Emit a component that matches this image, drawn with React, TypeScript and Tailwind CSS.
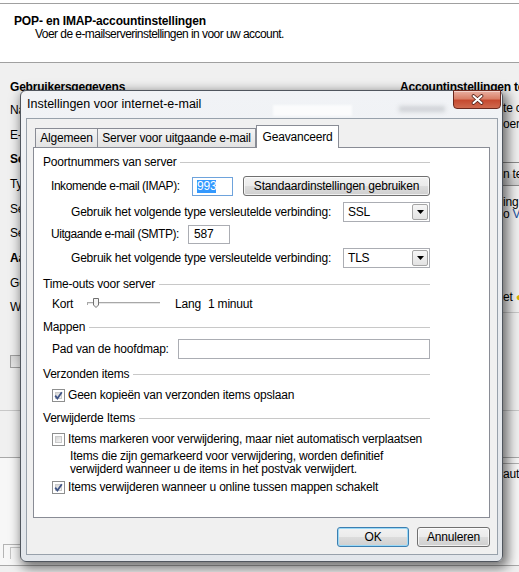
import React from "react";

function Checkbox({ checked }: { checked: boolean }) {
  return (
    <span className="relative flex h-[13px] w-[13px] shrink-0 items-center justify-center border border-[#8e8f8f] bg-white">
      <span className="absolute inset-[2px] border border-[#cacaca] bg-[linear-gradient(135deg,#d6d6d6,#f6f6f6)]" />
      {checked && (
        <svg className="relative" width="9" height="9" viewBox="0 0 9 9">
          <path d="M1.2 4.6 L3.4 7.4 L7.8 1.2" fill="none" stroke="#3f5486" strokeWidth="1.8" />
        </svg>
      )}
    </span>
  );
}

function Group({ title, className }: { title: string; className: string }) {
  return (
    <div className={`flex h-[16px] items-center ${className}`}>
      <span className="whitespace-nowrap">{title}</span>
      <span className="ml-[4px] h-px flex-1 bg-[#c8c8c8]" />
    </div>
  );
}

function Select({ value }: { value: string }) {
  return (
    <div className="flex h-[20px] w-[87px] shrink-0 items-center border border-[#abadb3] bg-white pl-[4px]">
      <span className="flex-1">{value}</span>
      <span className="mr-px flex h-[16px] w-[16px] items-center justify-center rounded-[2px] border border-[#a5a5a5] bg-[linear-gradient(#f6f6f6,#e3e3e3)]">
        <svg width="7" height="4" viewBox="0 0 7 4">
          <path d="M0 0h7L3.5 4z" fill="#000" />
        </svg>
      </span>
    </div>
  );
}

function Slider() {
  return (
    <svg width="73" height="16" viewBox="0 0 73 16" className="shrink-0">
      <line x1="0" y1="6.5" x2="73" y2="6.5" stroke="#a8a8a8" />
      <line x1="0" y1="7.5" x2="73" y2="7.5" stroke="#e6e6e6" />
      <line x1="0.5" y1="6" x2="0.5" y2="9" stroke="#a8a8a8" />
      <path d="M6.5 2.5 H11.5 V9 L9 11.5 L6.5 9 Z" fill="#f4f4f4" stroke="#707070" />
    </svg>
  );
}

export default function App() {
  return (
    <div className="relative h-[572px] w-[519px] overflow-hidden bg-[#f0f0f0] font-['Liberation_Sans',Arial,sans-serif] text-[12px] leading-[15px] tracking-[-0.2px] text-black">
      {/* wizard page header */}
      <div className="bg-white pt-[3px]">
        <div className="h-[60px] border-y border-[#a0a0a0] pl-[14px] pt-[11px] leading-[13px]">
          <div className="font-bold tracking-[-0.15px]">POP- en IMAP-accountinstellingen</div>
          <div className="pl-[21px] tracking-[-0.55px]">Voer de e-mailserverinstellingen in voor uw account.</div>
        </div>
      </div>

      {/* wizard page body */}
      <div className="flex h-[347px]">
        <div className="w-[400px] shrink-0 pl-[10px] pt-[17px]">
          <div className="font-bold">Gebruikersgegevens</div>
          <div className="mt-[3px] flex h-[24.7px] items-center">Naam:</div>
          <div className="flex h-[24.7px] items-center">E-mailadres:</div>
          <div className="flex h-[24.7px] items-center font-bold">Servergegevens</div>
          <div className="flex h-[24.7px] items-center">Type account:</div>
          <div className="flex h-[24.7px] items-center">Server voor inkomende e-mail:</div>
          <div className="flex h-[24.7px] items-center">Server voor uitgaande e-mail (SMTP):</div>
          <div className="flex h-[24.7px] items-center font-bold">Aanmeldingsgegevens</div>
          <div className="flex h-[24.7px] items-center">Gebruikersnaam:</div>
          <div className="flex h-[24.7px] items-center">Wachtwoord:</div>
          <div className="mt-[34px] flex items-center gap-[4px]">
            <span className="h-[13px] w-[13px] border border-[#a0a0a0] bg-[linear-gradient(135deg,#d8d8d8,#f4f4f4)]" />
            <span>Wachtwoord onthouden</span>
          </div>
        </div>
        <div className="min-w-0 flex-1 overflow-hidden pt-[17px]">
          <div className="whitespace-nowrap font-bold">Accountinstellingen testen</div>
          <div className="mt-[5px] whitespace-nowrap pl-[103px] leading-[16px]">
            <div>te controleren</div>
            <div>oeren</div>
          </div>
          <div className="ml-[20px] mt-[30px] flex h-[24px] w-[120px] items-center whitespace-nowrap rounded-[3px] border border-[#8a8a8a] bg-[linear-gradient(#f2f2f2_0%,#ebebeb_50%,#dddddd_50%,#cfcfcf_100%)] pl-[82px]">
            n testen
          </div>
          <div className="mt-[10px] whitespace-nowrap pl-[103px] leading-[12px]">
            <div>ing</div>
            <div>
              o <span className="text-[#1a4f9c]">Volgende</span>
            </div>
          </div>
          <div className="mt-[70px] whitespace-nowrap pl-[103px]">
            et <span className="text-[#d8b000]">●</span>
          </div>
          <div className="mt-[7px] h-px bg-[#c8c8c8]" />
        </div>
      </div>

      {/* wizard footer */}
      <div className="h-[47px] border-t border-[#c8c8c8]" />
      <div className="flex h-[109px] border-y border-[#a8a8a8] bg-[#f7f7f7]">
        <div className="flex-1 pl-[3px] pt-[86px]">
          <div className="h-[14px] w-[20px] border-l border-t border-[#b4b4b4] pl-[6px]">
            <div className="mt-[2px] h-[12px] border-l border-t border-[#c4c4c4]" />
          </div>
        </div>
        <div className="mt-[5px] h-[30px] w-[18px] whitespace-nowrap border-t border-[#b0b0b0] pl-[2px] pt-[3px]">aut</div>
      </div>

      {/* Internet e-mail settings dialog */}
      <div className="absolute left-[20px] top-[90px] flex h-[472px] w-[483px] flex-col rounded-[6px] border border-[#50565e] bg-[linear-gradient(180deg,#f1f3f6,#e2e6eb)] shadow-[3px_4px_12px_2px_rgba(0,0,0,0.55)]">
        <div className="pointer-events-none absolute left-[252px] top-[14px] h-[11px] w-[79px] bg-white/70 blur-[1px]" />
        <div className="pointer-events-none absolute left-[378px] top-[15px] h-[6px] w-[46px] bg-[#b9bdc2]/60 blur-[2px]" />

        <div className="relative flex h-[27px] items-center pl-[6px] text-[12.5px] tracking-normal">
          Instellingen voor internet-e-mail
        </div>

        <div className="absolute right-[1px] top-[-1px] flex h-[19px] w-[48px] items-center justify-center rounded-b-[4px] border border-[#6a281d] bg-[linear-gradient(180deg,#eab0a2_0%,#d98068_45%,#c64a30_55%,#cf6a4f_100%)] shadow-[inset_0_1px_0_rgba(255,255,255,0.45)]">
          <svg width="13" height="11" viewBox="0 0 13 11">
            <path d="M2.5 2 L10.5 9 M10.5 2 L2.5 9" stroke="#4f2019" strokeWidth="3.6" strokeLinecap="round" />
            <path d="M2.5 2 L10.5 9 M10.5 2 L2.5 9" stroke="#ffffff" strokeWidth="2" strokeLinecap="round" />
          </svg>
        </div>

        <div className="ml-[5px] flex h-[437px] w-[472px] flex-col border border-[#98a1ab] bg-[#f0f0f0] pl-[6px] pr-[7px]">
          {/* tabs */}
          <div className="mt-[6px] flex h-[22px] items-end pl-[2px]">
            <div className="flex h-[19px] w-[63px] items-center justify-center border border-b-0 border-[#898c95] bg-[linear-gradient(#f4f4f4,#e3e3e3)]">
              Algemeen
            </div>
            <div className="flex h-[19px] w-[158px] items-center justify-center border border-b-0 border-l-0 border-[#898c95] bg-[linear-gradient(#f4f4f4,#e3e3e3)]">
              Server voor uitgaande e-mail
            </div>
            <div className="relative z-10 -mb-px flex h-[23px] w-[83px] items-center justify-center border border-b-0 border-[#898c95] bg-white">
              Geavanceerd
            </div>
          </div>

          {/* tab page */}
          <div className="flex h-[371px] flex-col border border-[#898c95] bg-white pl-[9px] pr-[59px]">
            <Group title="Poortnummers van server" className="h-[28px]" />

            <div className="flex h-[20px] items-center pl-[8px]">
              <span className="w-[141px] shrink-0 tracking-[-0.45px]">Inkomende e-mail (IMAP):</span>
              <div className="flex h-[19px] w-[41px] shrink-0 items-center border border-[#6ea3dc] bg-white pl-[4px]">
                <span className="bg-[#3399ff] leading-[13px] text-white">993</span>
              </div>
              <div className="ml-[10px] flex h-[20px] flex-1 items-center justify-center rounded-[3px] border border-[#707070] bg-[linear-gradient(#f2f2f2_0%,#ebebeb_50%,#dddddd_50%,#cfcfcf_100%)] shadow-[inset_0_0_0_1px_rgba(255,255,255,0.7)]">
                Standaardinstellingen gebruiken
              </div>
            </div>

            <div className="mt-[6px] flex h-[20px] items-center pl-[28px]">
              <span className="flex-1">Gebruik het volgende type versleutelde verbinding:</span>
              <Select value="SSL" />
            </div>

            <div className="mt-[3px] flex h-[19px] items-center pl-[8px]">
              <span className="w-[137px] shrink-0 tracking-[-0.45px]">Uitgaande e-mail (SMTP):</span>
              <div className="flex h-[19px] w-[42px] shrink-0 items-center border border-[#abadb3] bg-white pl-[5px]">587</div>
            </div>

            <div className="mt-[4px] flex h-[20px] items-center pl-[28px]">
              <span className="flex-1">Gebruik het volgende type versleutelde verbinding:</span>
              <Select value="TLS" />
            </div>

            <Group title="Time-outs voor server" className="mt-[8px]" />

            <div className="mt-[4px] flex h-[16px] items-center pl-[9px]">
              <span className="w-[35px] shrink-0">Kort</span>
              <Slider />
              <span className="ml-[15px] w-[33px] shrink-0">Lang</span>
              <span>1 minuut</span>
            </div>

            <Group title="Mappen" className="mt-[7px]" />

            <div className="mt-[4px] flex h-[20px] items-center pl-[9px]">
              <span className="w-[126px] shrink-0">Pad van de hoofdmap:</span>
              <div className="h-[20px] flex-1 border border-[#abadb3] bg-white" />
            </div>

            <Group title="Verzonden items" className="mt-[7px]" />

            <div className="mt-[5px] flex h-[16px] items-center gap-[3px] pl-[9px]">
              <Checkbox checked />
              <span className="whitespace-nowrap">Geen kopieën van verzonden items opslaan</span>
            </div>

            <Group title="Verwijderde Items" className="mt-[7px]" />

            <div className="mt-[5px] flex h-[16px] items-center gap-[3px] pl-[9px]">
              <Checkbox checked={false} />
              <span className="whitespace-nowrap">Items markeren voor verwijdering, maar niet automatisch verplaatsen</span>
            </div>

            <div className="mt-[3px] whitespace-nowrap pl-[27px] leading-[13px]">
              <div>Items die zijn gemarkeerd voor verwijdering, worden definitief</div>
              <div>verwijderd wanneer u de items in het postvak verwijdert.</div>
            </div>

            <div className="mt-[3px] flex h-[16px] items-center gap-[3px] pl-[9px]">
              <Checkbox checked />
              <span className="whitespace-nowrap">Items verwijderen wanneer u online tussen mappen schakelt</span>
            </div>
          </div>

          {/* dialog buttons */}
          <div className="mt-[9px] flex justify-end gap-[8px]">
            <div className="flex h-[20px] w-[72px] items-center justify-center rounded-[3px] border border-[#3c7fb1] bg-[linear-gradient(#f2f2f2_0%,#ebebeb_50%,#dddddd_50%,#cfcfcf_100%)] shadow-[inset_0_0_0_1px_#9ad9f7]">
              OK
            </div>
            <div className="flex h-[20px] w-[73px] items-center justify-center rounded-[3px] border border-[#707070] bg-[linear-gradient(#f2f2f2_0%,#ebebeb_50%,#dddddd_50%,#cfcfcf_100%)] shadow-[inset_0_0_0_1px_rgba(255,255,255,0.7)]">
              Annuleren
            </div>
          </div>
        </div>
      </div>
    </div>
  );
}
